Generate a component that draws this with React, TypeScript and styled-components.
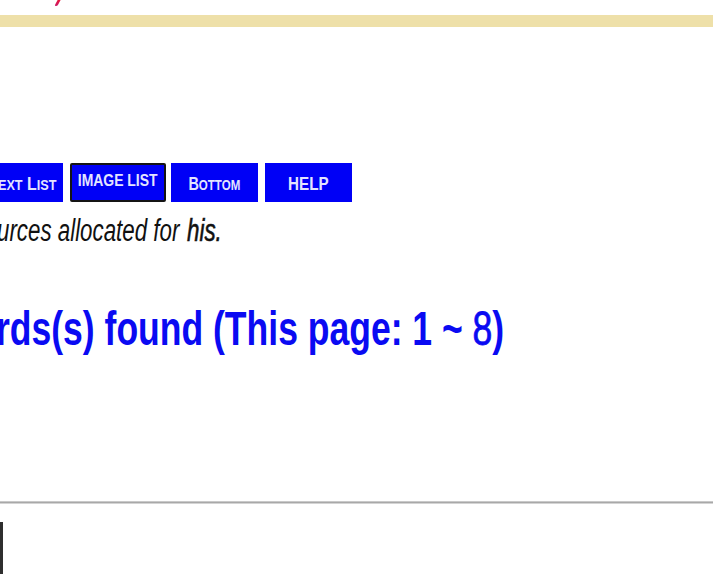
import React from "react";
import styled, { createGlobalStyle } from "styled-components";

const Global = createGlobalStyle`
  html, body {
    margin: 0;
    padding: 0;
    background: #ffffff;
    width: 713px;
    height: 574px;
    overflow: hidden;
  }
  body {
    font-family: "Liberation Sans", Arial, sans-serif;
  }
`;

const Page = styled.div`
  width: 713px;
  height: 574px;
  overflow: hidden;
  display: flex;
  flex-direction: column;
`;

const TopStrip = styled.div`
  height: 15px;
  padding-left: 56px;
  display: flex;
  align-items: flex-start;
`;

const TitleTail = styled.span`
  display: block;
  width: 3px;
  height: 6px;
  border-radius: 0 0 2px 2px;
  background: linear-gradient(180deg, #e8183a 0%, #c81a6a 100%);
  transform: skewX(-28deg);
`;

const Band = styled.div`
  height: 12px;
  background: #eee0a9;
`;

const Toolbar = styled.div`
  margin-top: 136px;
  display: flex;
  gap: 7px;
  height: 39px;
`;

const NavButton = styled.div<{ $w: number; $lead?: number; $active?: boolean; $align?: string }>`
  box-sizing: border-box;
  width: ${(p) => p.$w}px;
  margin-left: ${(p) => p.$lead ?? 0}px;
  margin-right: ${(p) => (p.$active ? -2 : 0)}px;
  height: 39px;
  background: #0000f6;
  border: ${(p) => (p.$active ? "2px solid #141414" : "none")};
  border-radius: ${(p) => (p.$active ? "2px" : "0")};
  display: flex;
  align-items: ${(p) => (p.$active ? "flex-start" : "center")};
  justify-content: ${(p) => p.$align ?? "center"};
  padding-top: ${(p) => (p.$active ? "7px" : "2px")};
  padding-right: ${(p) => (p.$align === "flex-end" ? "7px" : "0")};
  overflow: hidden;
`;

const Label = styled.span<{ $size: number; $sx: number; $origin?: string }>`
  display: inline-block;
  white-space: nowrap;
  font-family: "Liberation Sans", Arial, sans-serif;
  font-weight: bold;
  font-size: ${(p) => p.$size}px;
  line-height: 1;
  color: #e4e4ff;
  transform: scaleX(${(p) => p.$sx});
  transform-origin: ${(p) => p.$origin ?? "center"};
`;

const Small = styled.span`
  font-size: 0.8em;
  text-transform: uppercase;
`;

const Note = styled.div`
  margin-top: 11px;
  height: 36px;
  margin-left: -3px;
  white-space: nowrap;
  font-family: "Liberation Sans", Arial, sans-serif;
  font-style: italic;
  font-size: 31px;
  line-height: 36px;
  color: #111111;
  transform: scaleX(0.72);
  transform-origin: left center;
`;

const Strong = styled.span`
  margin-left: 2px;
  -webkit-text-stroke: 0.6px #111111;
`;

const Heading = styled.h1`
  margin: 52px 0 0 -4px;
  height: 56px;
  white-space: nowrap;
  font-family: "Liberation Sans", Arial, sans-serif;
  font-weight: bold;
  font-size: 48px;
  line-height: 56px;
  color: #0a0af2;
  transform: scaleX(0.74);
  transform-origin: left center;
`;

const Light = styled.span`
  font-weight: normal;
  -webkit-text-stroke: 0.8px #0a0af2;
`;

const Rule = styled.div`
  margin-top: 144px;
  height: 3px;
  box-sizing: border-box;
  border-top: 1px solid #c9c9c9;
  background: #a8a8a8;
  border-bottom: 1px solid #d4d4d4;
`;

const Box = styled.div`
  margin-top: 18px;
  flex: 1;
  border-left: 3px solid #2e2e2e;
  width: 713px;
`;

export default function App() {
  return (
    <Page>
      <Global />
      <TopStrip>
        <TitleTail />
      </TopStrip>
      <Band />
      <Toolbar>
        <NavButton $w={90} $lead={-27} $align="flex-end">
          <Label $size={18} $sx={0.88} $origin="right center">
            T<Small>ext</Small> L<Small>ist</Small>
          </Label>
        </NavButton>
        <NavButton $w={96} $active>
          <Label $size={17} $sx={0.82}>
            IMAGE LIST
          </Label>
        </NavButton>
        <NavButton $w={87}>
          <Label $size={18} $sx={0.8}>
            B<Small>ottom</Small>
          </Label>
        </NavButton>
        <NavButton $w={87}>
          <Label $size={19} $sx={0.8}>
            HELP
          </Label>
        </NavButton>
      </Toolbar>
      <Note>
        urces allocated for <Strong>his.</Strong>
      </Note>
      <Heading>
        rds(s) found (This page: 1 ~ <Light>8</Light>)
      </Heading>
      <Rule />
      <Box />
    </Page>
  );
}
